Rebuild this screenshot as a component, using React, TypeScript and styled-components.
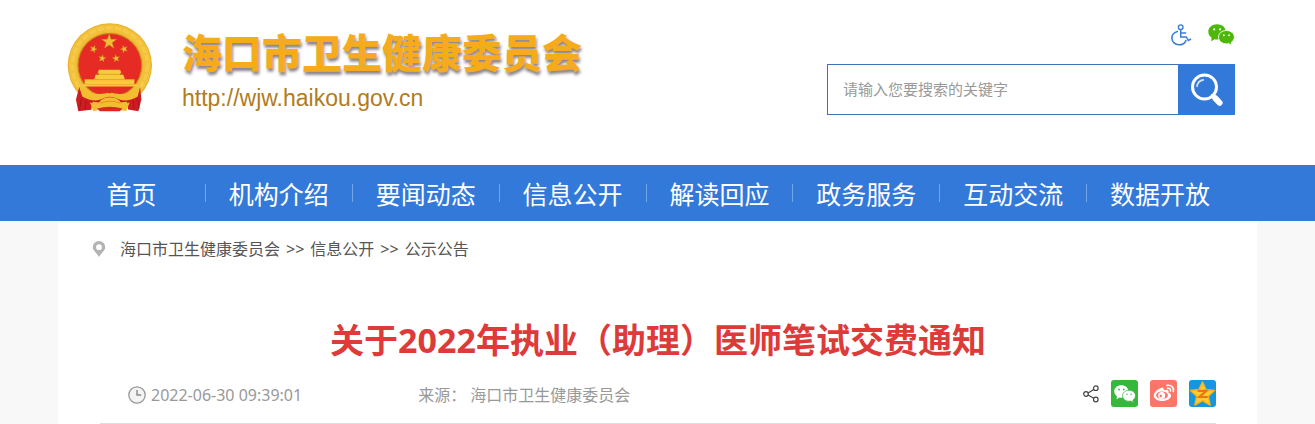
import React from 'react';
import styled, { createGlobalStyle } from 'styled-components';

const GlobalStyle = createGlobalStyle`
  * { box-sizing: border-box; }
  body {
    margin: 0;
    background: #f8f8f8;
    font-family: "Noto Sans", "Noto Sans CJK SC", sans-serif;
    font-size: 16px;
    line-height: 24px;
    color: #444;
  }
  a { color: inherit; text-decoration: none; }
  svg { display: block; }
`;

const Container = styled.div`
  max-width: 1199px;
  margin: 0 auto;
`;

const Header = styled.header`
  background: #fff;
`;

const HeaderInner = styled(Container)`
  display: flex;
  justify-content: space-between;
  align-items: flex-start;
  min-height: 165px;
  padding: 23px 22px 0 9px;
`;

const Brand = styled.a`
  display: flex;
  gap: 30px;
`;

const BrandName = styled.div`
  font: 900 40px/48px "Noto Sans CJK SC", sans-serif;
  color: #f5ab1c;
  text-shadow: 1px 3px 3px rgba(60, 50, 60, 0.6);
  padding-top: 4px;
`;

const BrandUrl = styled.div`
  font: 23px/26px "Liberation Sans", Arial, sans-serif;
  color: #b07c1e;
  padding-top: 10px;
`;

const Tools = styled.div`
  display: flex;
  flex-direction: column;
  align-items: flex-end;
  gap: 18px;
`;

const QuickLinks = styled.div`
  display: flex;
  align-items: center;
  gap: 16px;
  height: 23px;
`;

const SearchForm = styled.form`
  display: flex;
  width: 408px;
  height: 51px;
`;

const SearchInput = styled.input`
  flex: 1;
  min-width: 0;
  border: 1px solid #3f73b5;
  border-right: 0;
  padding: 0 16px 2px 15px;
  background: #fff;
  color: #444;
  font: 15px "Noto Sans CJK SC", sans-serif;
  &::placeholder { color: #999; opacity: 1; }
`;

const SearchButton = styled.button`
  display: grid;
  place-items: center;
  width: 57px;
  padding: 0;
  border: 0;
  background: #3379d9;
  cursor: pointer;
`;

const NavBar = styled.nav`
  background: #3379d9;
`;

const NavList = styled.ul`
  display: grid;
  grid-template-columns: repeat(8, 1fr);
  max-width: 1199px;
  margin: 0 auto;
  padding: 0 24px 0 0;
  list-style: none;
`;

const NavItem = styled.li`
  display: flex;
  align-items: center;
  height: 56px;
  & + & a { border-left: 1px solid #74a7ea; }
`;

const NavLink = styled.a`
  flex: 1;
  height: 18px;
  line-height: 18px;
  font-family: "Noto Sans CJK SC", sans-serif;
  font-size: 25px;
  text-align: center;
  white-space: nowrap;
  color: #fff;
`;

const Article = styled.main`
  max-width: 1199px;
  margin: 0 auto;
  padding: 16px 41px 0 42px;
  background: #fff;
`;

const Breadcrumb = styled.nav`
  display: flex;
  align-items: center;
  margin-left: -8px;
  color: #555;
  svg { margin-right: 14px; }
`;

const Separator = styled.span`
  margin: 0 6px;
`;

const Title = styled.h1`
  margin: 55px 0 0;
  font-size: 34px;
  line-height: 48px;
  font-weight: 700;
  text-align: center;
  color: #dd3a3a;
`;

const MetaRow = styled.div`
  display: flex;
  align-items: center;
  justify-content: space-between;
  height: 60px;
  padding-left: 28px;
  border-bottom: 1px solid #ddd;
  color: #999;
`;

const MetaInfo = styled.div`
  display: flex;
  gap: 116px;
  padding-top: 2px;
`;

const DateStamp = styled.time`
  display: flex;
  align-items: center;
  gap: 5px;
`;

const Source = styled.span`
  display: flex;
  gap: 4px;
`;

const ShareList = styled.div`
  display: flex;
  align-items: center;
  gap: 12px;
`;

const ShareButton = styled.button<{ $color?: string }>`
  display: grid;
  place-items: center;
  min-width: 16px;
  height: 27px;
  padding: 0;
  border: 0;
  border-radius: 3px;
  background: ${(p) => p.$color ?? 'transparent'};
  cursor: pointer;
`;

const IconPad = styled.span`
  display: grid;
  place-items: center;
  width: 27px;
`;

const star = (cx: number, cy: number, r: number, turn = -90) =>
  Array.from({ length: 10 }, (_, i) => {
    const a = ((turn + i * 36) * Math.PI) / 180;
    const d = i % 2 ? r * 0.4 : r;
    return `${(cx + d * Math.cos(a)).toFixed(1)},${(cy + d * Math.sin(a)).toFixed(1)}`;
  }).join(' ');

const Emblem = () => (
  <svg width="85" height="90" viewBox="51 38 256 270" aria-hidden="true">
    <circle cx="180" cy="165" r="127" fill="#e9b02a" />
    <circle cx="180" cy="165" r="112" fill="none" stroke="#f2c03a" strokeWidth="24" />
    <circle cx="180" cy="165" r="113" fill="none" stroke="#f6ca48" strokeWidth="10" strokeDasharray="20 6" />
    <circle cx="180" cy="165" r="96" fill="#e62b25" stroke="#c98b1c" strokeWidth="3" />
    <g fill="#f0bd3a" stroke="#c47a1c" strokeWidth="1">
      <polygon points={star(178, 94, 24)} />
      <polygon points={star(131, 116, 12, -70)} />
      <polygon points={star(223, 116, 12, -110)} />
      <polygon points={star(157, 144, 12, -80)} />
      <polygon points={star(199, 144, 12, -100)} />
    </g>
    <g fill="#f7cb3e">
      <path d="M147 178h64l4 11h-4v5h10l4 13h29v15H104v-15h29l4-13h10v-5h-4z" />
      <path d="M98 222h164v7H98z" />
    </g>
    <path d="M137 192h84M104 208h150" stroke="#d68f22" strokeWidth="2" />
    <path d="M90 230Q136 262 180 246Q224 262 270 230L260 269Q220 288 180 280Q140 288 100 269Z" fill="#f4bd30" />
    <path d="M118 233Q155 231 180 246Q205 231 242 233L218 240Q195 240 180 250Q162 240 142 240Z" fill="#dd2d25" />
    <path d="M88 230L97 259Q133 280 159 265Q180 254 201 265Q229 280 264 259L271 230L275 268L266 303L235 298L232 275Q202 279 180 275Q157 280 128 275L124 299L85 303L78 268Z" fill="#cf1c22" />
    <path d="M94 265l-5 33M109 270l-4 29M250 269l4 29M264 264l4 31" stroke="#a9141a" strokeWidth="3" />
    <path d="M120 276Q135 284 147 279Q153 262 180 261Q208 262 214 279Q226 284 240 276L229 303L207 298Q180 307 153 298L130 303Z" fill="#f4bd30" />
    <path d="M151 279Q180 267 211 279" fill="none" stroke="#e09428" strokeWidth="3" />
    <path d="M142 295Q180 285 218 295L210 303H150Z" fill="#d8281f" />
  </svg>
);

const WheelchairIcon = () => (
  <svg width="21" height="22" viewBox="0 0 21 22" fill="none" stroke="#3d7bd9" aria-hidden="true">
    <circle cx="9.7" cy="3.2" r="2.3" strokeWidth="1.4" />
    <path d="M9.7 5.7v7.2h5.6l2 3.6 2.700-1.500M10 8.900h5.200" strokeWidth="1.5" />
    <path d="M7 7.200C2.700 8.200.8 11.500.9 14.200c.2 3.700 3.100 6.600 7.100 6.600 3.500 0 6.100-1.600 7.100-4.900" strokeWidth="1.6" />
  </svg>
);

const WechatIcon = ({ size, color, back }: { size: number; color: string; back: string }) => (
  <svg width={size} height={Math.round(size * 0.8)} viewBox="0 0 27 21" preserveAspectRatio="none" aria-hidden="true">
    <path d="M9 .2C4 .2 .3 3.300.3 7.300c0 2.400 1.300 4.300 3.300 5.700l-.5 3.500 3.600-2c.8.2 1.600.3 2.500.3 4.900 0 8.600-3.200 8.600-7.400S14 .2 9 .2z" fill={color} />
    <path d="M18.500 6.200c-4.700 0-8 2.800-8 6.400s3.400 6.400 8 6.400c.9 0 1.600-.1 2.300-.3l3 2-.6-3.100c2-1.200 3.200-3 3.200-5 0-3.600-3.400-6.400-7.900-6.400z" fill={color} stroke={back} strokeWidth=".9" />
    <g fill={back}>
      <circle cx="6.200" cy="5.200" r="1.100" /><circle cx="12" cy="5.200" r="1.100" />
      <circle cx="15.900" cy="10.700" r=".9" /><circle cx="21" cy="10.700" r=".9" />
    </g>
  </svg>
);

const SearchIcon = () => (
  <svg width="34" height="34" viewBox="0 0 34 34" fill="none" stroke="#fff" strokeLinecap="round" aria-hidden="true">
    <circle cx="14.500" cy="14" r="12" strokeWidth="3" />
    <path d="M7 13.500c.4-3.600 2.800-6 6.300-6.600" strokeWidth="1.600" opacity=".8" />
    <path d="M22.400 22.400l2 2" strokeWidth="3" />
    <path d="M25.200 25.100l4.400 4.700" strokeWidth="6" />
  </svg>
);

const PinIcon = () => (
  <svg width="14" height="18" viewBox="0 0 14 18" aria-hidden="true">
    <path d="M7 1a6.200 6.200 0 0 0-6.200 6.300C.8 10.800 5 13.200 7 17c2-3.800 6.200-6.200 6.200-9.700A6.200 6.200 0 0 0 7 1zm0 3.300a2.900 2.900 0 1 1 0 5.800 2.900 2.900 0 0 1 0-5.800z" fill="#b3b3b3" fillRule="evenodd" />
  </svg>
);

const ClockIcon = () => (
  <svg width="18" height="18" viewBox="0 0 18 18" fill="none" aria-hidden="true">
    <circle cx="9" cy="9" r="8.200" fill="#f4f4f4" stroke="#999" strokeWidth="1.300" />
    <path d="M9 4v5h4.200" stroke="#888" strokeWidth="1.400" />
  </svg>
);

const ShareIcon = () => (
  <svg width="16" height="18" viewBox="0 0 16 18" fill="none" stroke="#444" strokeWidth="1.200" aria-hidden="true">
    <circle cx="3" cy="9" r="2.300" /><circle cx="12.800" cy="3.200" r="2.300" /><circle cx="12.800" cy="14.500" r="2.300" />
    <path d="M5.100 8l5.600-3.500M5.100 10l5.600 3.300" />
  </svg>
);

const WeiboIcon = () => (
  <svg width="27" height="27" viewBox="0 0 27 27" fill="none" aria-hidden="true">
    <path d="M10.500 8.200c1.800-.8 3.600-.5 3.300 1.400l-.1.600c2.200-.8 4.800-.8 4.900 1.200 0 .5-.2.900-.3 1.300 1.600.4 2.700 1.300 2.700 2.700 0 3.100-4.100 5.500-8.700 5.500-4.600 0-8.500-2.100-8.500-5.500 0-2.700 3.300-6 6.700-7.200z" fill="#fff" />
    <ellipse cx="12" cy="15.300" rx="5.900" ry="3.900" fill="#fb7568" />
    <circle cx="11.700" cy="15.400" r="3.500" fill="#fff" />
    <circle cx="10.800" cy="16" r="1.300" fill="#fb7568" />
    <path d="M17 5.400c4.300-1 7.300 2.200 6.300 6M17.600 8.300c2-.3 3.300 1 2.900 2.700" stroke="#fff" strokeWidth="1.600" strokeLinecap="round" />
  </svg>
);

const QzoneIcon = () => (
  <svg width="27" height="27" viewBox="0 0 27 27" aria-hidden="true">
    <path d="M13.500 2l3.500 7.600 8.500.9-6.300 5.700 1.900 8.800-7.600-4.300L5.900 25l1.900-8.800-6.300-5.700 8.500-.9z" fill="#ffce2e" stroke="#f4b51d" strokeWidth="1.500" strokeLinejoin="round" />
    <path d="M8.500 10.800h9l-7.300 6.200h8.500" fill="none" stroke="#e87516" strokeWidth="2.200" />
  </svg>
);

const sections = ['首页', '机构介绍', '要闻动态', '信息公开', '解读回应', '政务服务', '互动交流', '数据开放'];

export default function App() {
  return (
    <>
      <GlobalStyle />
      <Header>
        <HeaderInner>
          <Brand href="#">
            <Emblem />
            <div>
              <BrandName>海口市卫生健康委员会</BrandName>
              <BrandUrl>http://wjw.haikou.gov.cn</BrandUrl>
            </div>
          </Brand>
          <Tools>
            <QuickLinks>
              <a href="#" aria-label="无障碍"><WheelchairIcon /></a>
              <a href="#" aria-label="微信"><WechatIcon size={27} color="#4db807" back="#fff" /></a>
            </QuickLinks>
            <SearchForm onSubmit={(e) => e.preventDefault()}>
              <SearchInput type="text" aria-label="搜索" placeholder="请输入您要搜索的关键字" />
              <SearchButton type="submit" aria-label="搜索"><SearchIcon /></SearchButton>
            </SearchForm>
          </Tools>
        </HeaderInner>
      </Header>
      <NavBar>
        <NavList>
          {sections.map((name) => (
            <NavItem key={name}><NavLink href="#">{name}</NavLink></NavItem>
          ))}
        </NavList>
      </NavBar>
      <Article>
        <Breadcrumb>
          <PinIcon />
          <a href="#">海口市卫生健康委员会</a>
          <Separator>&gt;&gt;</Separator>
          <a href="#">信息公开</a>
          <Separator>&gt;&gt;</Separator>
          <a href="#">公示公告</a>
        </Breadcrumb>
        <Title>关于2022年执业（助理）医师笔试交费通知</Title>
        <MetaRow>
          <MetaInfo>
            <DateStamp dateTime="2022-06-30T09:39:01"><ClockIcon />2022-06-30 09:39:01</DateStamp>
            <Source><span>来源：</span><span>海口市卫生健康委员会</span></Source>
          </MetaInfo>
          <ShareList>
            <ShareButton aria-label="分享"><ShareIcon /></ShareButton>
            <ShareButton $color="#36b83c" aria-label="分享到微信">
              <IconPad><WechatIcon size={22} color="#fff" back="#36b83c" /></IconPad>
            </ShareButton>
            <ShareButton $color="#fb7568" aria-label="分享到微博"><WeiboIcon /></ShareButton>
            <ShareButton $color="#1597e0" aria-label="分享到QQ空间"><QzoneIcon /></ShareButton>
          </ShareList>
        </MetaRow>
      </Article>
    </>
  );
}
